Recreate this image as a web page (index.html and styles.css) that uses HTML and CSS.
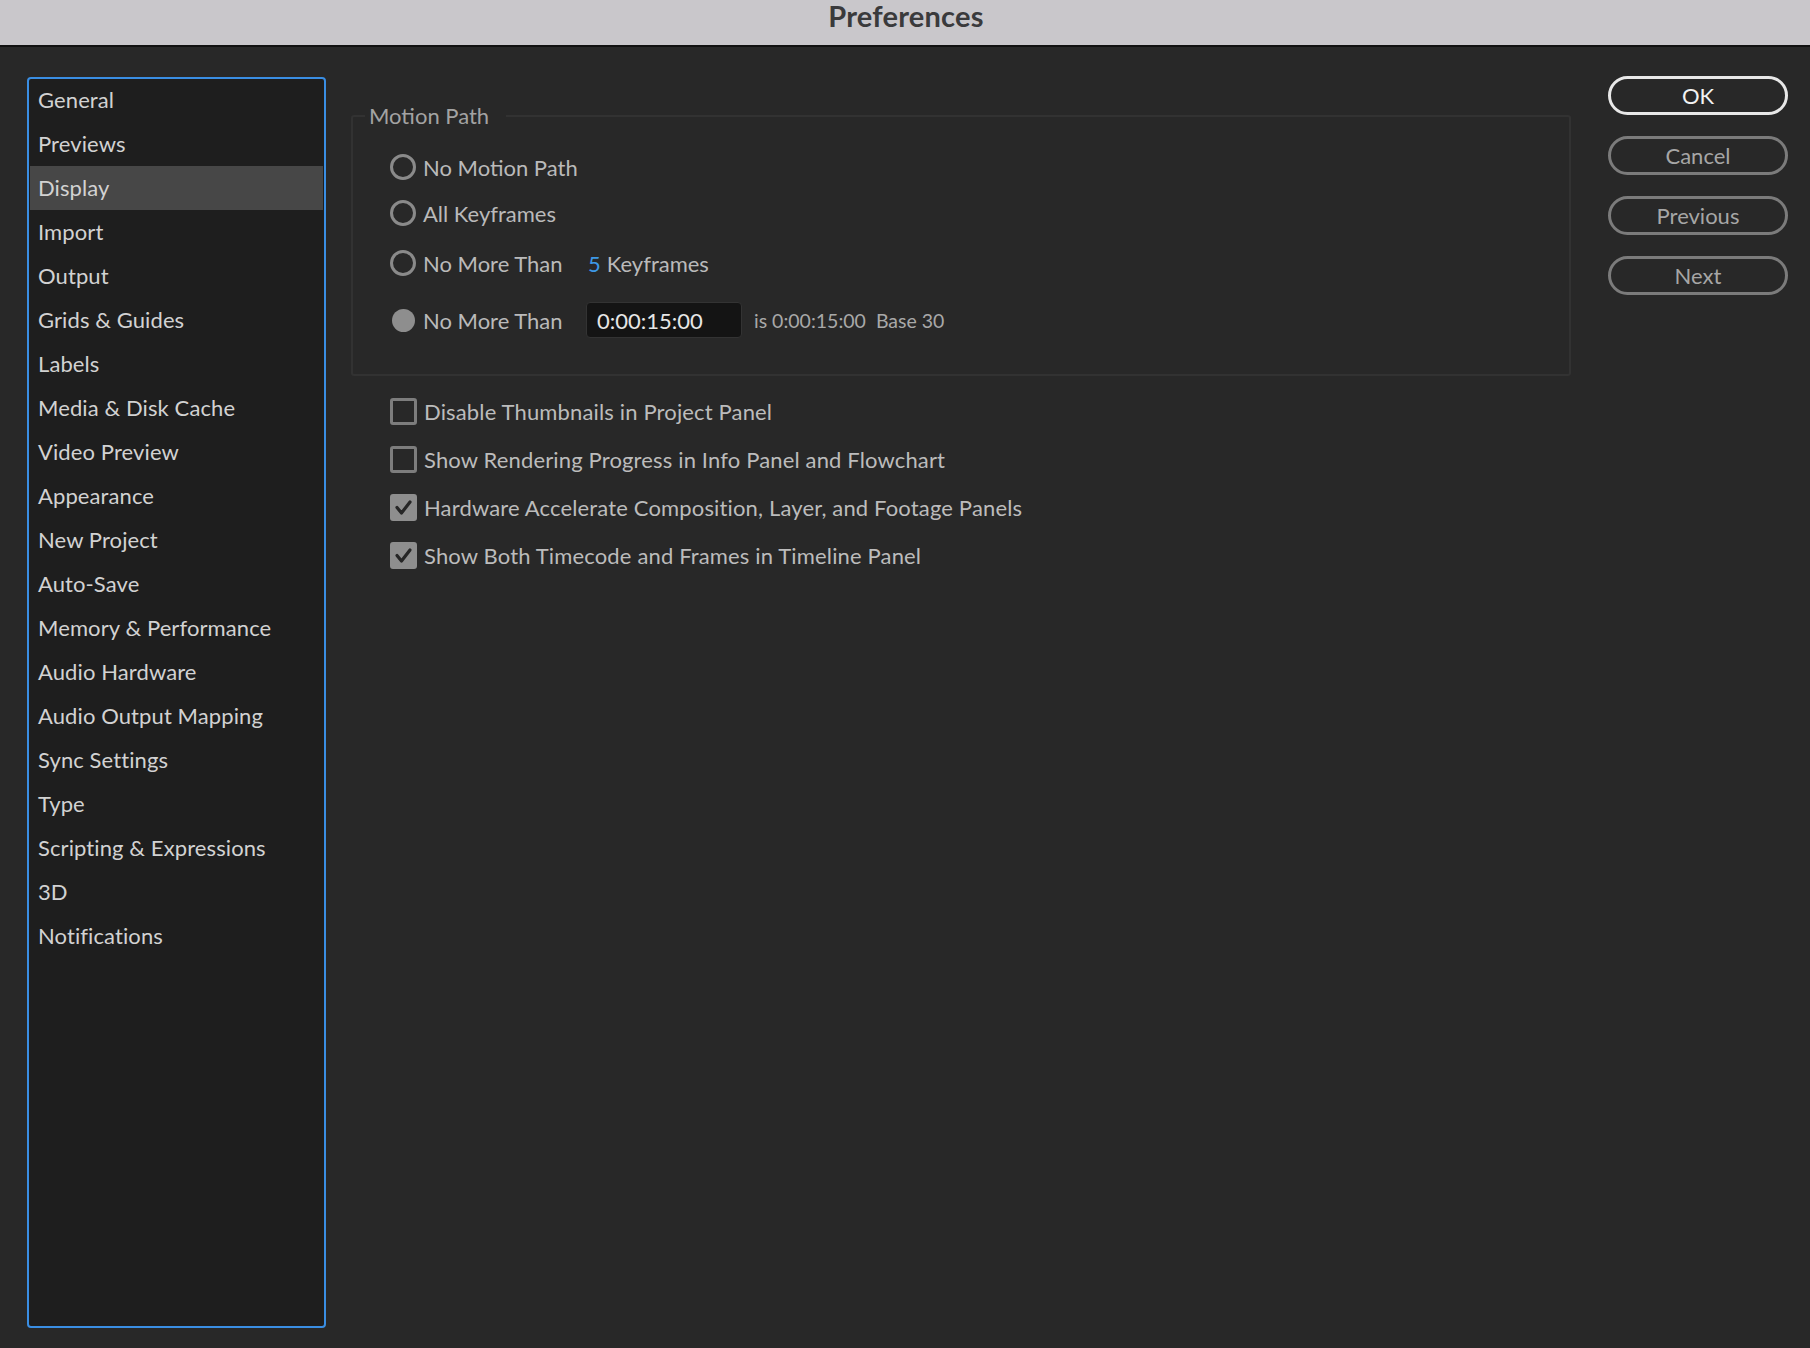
FILE: index.html
```html
<!DOCTYPE html>
<html lang="en">
<head>
<meta charset="utf-8">
<title>Preferences</title>
<link rel="stylesheet" href="styles.css">
</head>
<body>
<header class="titlebar"><span class="title">Preferences</span></header>
<div class="content">
  <nav class="sidebar">
    <ul class="nav-list">
      <li class="nav-item">General</li>
      <li class="nav-item">Previews</li>
      <li class="nav-item is-active">Display</li>
      <li class="nav-item">Import</li>
      <li class="nav-item">Output</li>
      <li class="nav-item">Grids &amp; Guides</li>
      <li class="nav-item">Labels</li>
      <li class="nav-item">Media &amp; Disk Cache</li>
      <li class="nav-item">Video Preview</li>
      <li class="nav-item">Appearance</li>
      <li class="nav-item">New Project</li>
      <li class="nav-item">Auto-Save</li>
      <li class="nav-item">Memory &amp; Performance</li>
      <li class="nav-item">Audio Hardware</li>
      <li class="nav-item">Audio Output Mapping</li>
      <li class="nav-item">Sync Settings</li>
      <li class="nav-item">Type</li>
      <li class="nav-item">Scripting &amp; Expressions</li>
      <li class="nav-item">3D</li>
      <li class="nav-item">Notifications</li>
    </ul>
  </nav>

  <main class="main">
    <fieldset class="group">
      <legend class="group-title">Motion Path</legend>
      <div class="group-body">
        <div class="radio-row row-a"><span class="radio"></span><span class="radio-label">No Motion Path</span></div>
        <div class="radio-row row-a"><span class="radio"></span><span class="radio-label">All Keyframes</span></div>
        <div class="radio-row row-b"><span class="radio"></span><span class="radio-label fixed">No More Than</span><span class="num">5</span><span class="radio-label">Keyframes</span></div>
        <div class="radio-row row-c"><span class="radio-slot"><span class="radio-dot"></span></span><span class="radio-label fixed">No More Than</span><span class="field">0:00:15:00</span><span class="hint">is 0:00:15:00&nbsp; Base 30</span></div>
      </div>
    </fieldset>

    <div class="checks">
      <div class="check-row"><span class="checkbox"></span><span class="check-label">Disable Thumbnails in Project Panel</span></div>
      <div class="check-row"><span class="checkbox"></span><span class="check-label">Show Rendering Progress in Info Panel and Flowchart</span></div>
      <div class="check-row"><span class="checkbox is-checked"><svg class="tick" viewBox="0 0 27 27"><path d="M7 13.5 L11.5 19 L20 8" fill="none" stroke="#262626" stroke-width="3.2" stroke-linecap="round" stroke-linejoin="round"/></svg></span><span class="check-label">Hardware Accelerate Composition, Layer, and Footage Panels</span></div>
      <div class="check-row"><span class="checkbox is-checked"><svg class="tick" viewBox="0 0 27 27"><path d="M7 13.5 L11.5 19 L20 8" fill="none" stroke="#262626" stroke-width="3.2" stroke-linecap="round" stroke-linejoin="round"/></svg></span><span class="check-label">Show Both Timecode and Frames in Timeline Panel</span></div>
    </div>
  </main>

  <div class="buttons">
    <button class="btn btn-primary">OK</button>
    <button class="btn">Cancel</button>
    <button class="btn">Previous</button>
    <button class="btn">Next</button>
  </div>
</div>
</body>
</html>
```

FILE: styles.css
```css
* { box-sizing: border-box; }

html, body {
  margin: 0;
  padding: 0;
  background: #282828;
  font-family: "Lato", "Open Sans", sans-serif;
  overflow: hidden;
}

.titlebar {
  height: 47px;
  background: #c9c7cb;
  border-bottom: 2px solid #111111;
  display: flex;
  align-items: flex-start;
  justify-content: center;
}

.title {
  font-size: 29px;
  line-height: 32px;
  font-weight: 700;
  color: #3a3a3c;
  margin-left: 2px;
  letter-spacing: 0.2px;
}

.content {
  display: flex;
  height: 1301px;
  padding: 30px 22px 20px 27px;
}

.sidebar {
  width: 299px;
  flex: none;
  background: #1e1e1e;
  border: 2px solid #3a8ee3;
  border-radius: 4px;
  padding: 0 1px;
}

.nav-list {
  list-style: none;
  margin: -1px 0 0 0;
  padding: 0;
}

.nav-item {
  height: 44px;
  line-height: 44px;
  padding-left: 8px;
  font-size: 22px;
  letter-spacing: 0.1px;
  color: #d2d2d2;
  white-space: nowrap;
}

.nav-item.is-active {
  background: #474747;
}

.main {
  width: 1220px;
  flex: none;
  margin-left: 25px;
}

.group {
  margin: 24px 0 0 0;
  padding: 0;
  border: 2px solid #323232;
  border-radius: 3px;
  min-width: 0;
}

.group-title {
  margin-left: 12px;
  padding: 0 17px 0 4px;
  line-height: 30px;
  font-size: 22px;
  color: #a3a3a3;
}

.group-body {
  padding: 13px 0 24px 37px;
}

.radio-row {
  display: flex;
  align-items: center;
  font-size: 22px;
  color: #bababa;
}

.row-a { height: 46px; }
.row-b { height: 54px; }
.row-c { height: 60px; }

.radio {
  width: 26px;
  height: 26px;
  border: 3px solid #8a8a8a;
  border-radius: 50%;
  flex: none;
  margin-right: 7px;
}

.radio-slot {
  width: 26px;
  height: 26px;
  flex: none;
  margin-right: 7px;
  display: flex;
  align-items: center;
  justify-content: center;
}

.radio-dot {
  width: 23px;
  height: 23px;
  border-radius: 50%;
  background: #8e8e8e;
}

.radio-label {
  white-space: nowrap;
}

.radio-label.fixed {
  width: 163px;
  flex: none;
}

.num {
  color: #3d98e6;
  margin-left: 2px;
  margin-right: 6px;
}

.field {
  width: 156px;
  height: 36px;
  flex: none;
  background: #141414;
  border: 1px solid #333333;
  border-radius: 4px;
  padding-left: 10px;
  display: flex;
  align-items: center;
  color: #e6e6e6;
  font-size: 22px;
}

.hint {
  margin-left: 12px;
  font-size: 19.5px;
  color: #a8a8a8;
  white-space: nowrap;
}

.checks {
  margin-top: 11px;
  padding-left: 39px;
}

.check-row {
  height: 48px;
  display: flex;
  align-items: center;
}

.checkbox {
  width: 27px;
  height: 27px;
  flex: none;
  border: 3px solid #7d7d7d;
  border-radius: 3px;
  position: relative;
}

.checkbox.is-checked {
  background: #8e8e8e;
  border-color: #8e8e8e;
}

.tick {
  position: absolute;
  left: -3px;
  top: -3px;
  width: 27px;
  height: 27px;
}

.check-label {
  margin-left: 7px;
  font-size: 22px;
  letter-spacing: 0.15px;
  color: #bcbcbc;
  white-space: nowrap;
}

.buttons {
  width: 180px;
  flex: none;
  margin-left: 37px;
  margin-top: -1px;
  display: flex;
  flex-direction: column;
  gap: 21px;
}

.btn {
  height: 39px;
  width: 180px;
  border: 3px solid #7b7b7b;
  border-radius: 20px;
  background: transparent;
  color: #a6a6a6;
  font-family: "Lato", "Open Sans", sans-serif;
  font-size: 22px;
  padding: 0;
  line-height: 1;
}

.btn-primary {
  border-color: #e8e8e8;
  color: #f2f2f2;
}
```
